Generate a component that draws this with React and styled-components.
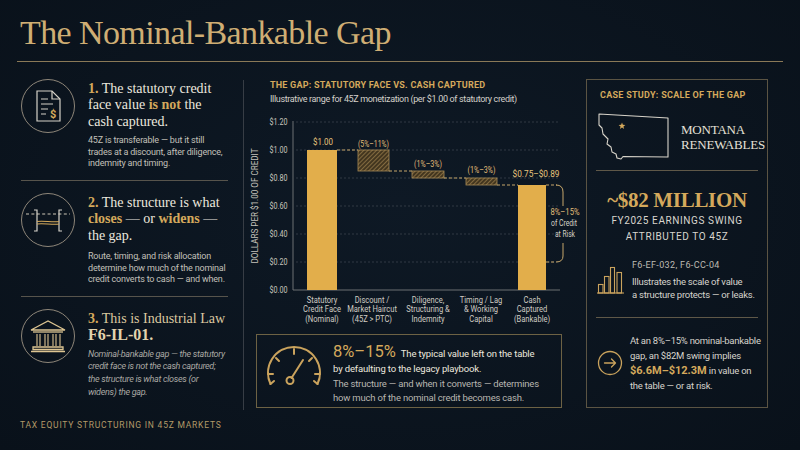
import styled, { createGlobalStyle } from 'styled-components'

const SANS = `Roboto, "Liberation Sans", sans-serif`
const SERIF = `"Liberation Serif", "Times New Roman", serif`
const GOLD = '#d4a95c'
const BAR = '#e2ae4b'
const INK = '#ece8df'
const MUTED = '#c2c0ba'

const GlobalStyle = createGlobalStyle`
  html, body { margin: 0; padding: 0; background: #0a131d; }
  * { box-sizing: border-box; }
  svg { flex: none; }
`

const Page = styled.div`
  width: 800px;
  height: 450px;
  overflow: hidden;
  background: radial-gradient(ellipse at 50% 45%, #0e1925 0%, #09111a 100%);
  color: ${INK};
  font-family: ${SANS};
  padding: 0 17px;
  display: flex;
  flex-direction: column;
`

const Header = styled.header`
  padding-top: 13px;
  padding-bottom: 8px;
  border-bottom: 1px solid #8a7957;
`

const Title = styled.h1`
  margin: 0;
  padding-left: 3px;
  font-family: ${SERIF};
  font-weight: 400;
  font-size: 34px;
  line-height: 40px;
  letter-spacing: -0.6px;
  color: #cfae74;
`

const Main = styled.main`
  flex: 1;
  display: flex;
  min-height: 0;
`

/* left column */

const LeftCol = styled.section`
  width: 215px;
  flex: none;
  display: flex;
  flex-direction: column;
  padding-top: 5px;
`

const Point = styled.div`
  display: flex;
  align-items: flex-start;
  gap: 13px;
  margin: 0 4px;
  padding: 12px 0 10px;
  border-bottom: ${({ $last }) => ($last ? 'none' : '1px solid #57544c')};
`

const Ring = styled.div`
  flex: none;
  width: 54px;
  height: 54px;
  border-radius: 50%;
  border: 1.2px solid #8e8679;
  display: flex;
  align-items: center;
  justify-content: center;
`

const PointText = styled.div`
  margin-top: 2px;
  white-space: nowrap;
`

const PointHead = styled.div`
  font-family: ${SERIF};
  font-size: 14px;
  line-height: 16.3px;
  color: ${({ $tone }) => $tone || INK};
`

const Num = styled.span`
  color: ${GOLD};
  font-weight: 700;
`

const Emph = styled.span`
  color: ${GOLD};
  font-weight: 700;
`

const Code = styled.span`
  font-size: 16px;
  font-weight: 700;
  color: #e2d3ae;
`

const PointBody = styled.p`
  margin: ${({ $gap }) => $gap || '6px'} 0 0;
  font-size: 9px;
  letter-spacing: ${({ $italic }) => ($italic ? '-0.3px' : '-0.2px')};
  line-height: ${({ $italic }) => ($italic ? '12.7px' : '11.7px')};
  font-style: ${({ $italic }) => ($italic ? 'italic' : 'normal')};
  color: ${({ $italic }) => ($italic ? '#a9a8a3' : MUTED)};
`

const Tagline = styled.div`
  margin-top: auto;
  padding: 0 0 19px 3px;
  font-size: 8.5px;
  line-height: 12px;
  letter-spacing: 0.78px;
  white-space: nowrap;
  color: #b39a68;
`

const VRule = styled.div`
  flex: none;
  width: 1px;
  background: #373d45;
  margin: 18px 6px 40px 11px;
`

/* centre column */

const CenterCol = styled.section`
  width: 315px;
  flex: none;
  display: flex;
  flex-direction: column;
  padding-top: 17px;
`

const ChartTitle = styled.h2`
  margin: 0;
  padding-left: 20px;
  font-size: 9px;
  line-height: 12px;
  font-weight: 700;
  letter-spacing: 0.22px;
  white-space: nowrap;
  color: ${GOLD};
`

const ChartSub = styled.p`
  margin: 2px 0 0;
  padding-left: 20px;
  font-size: 9px;
  line-height: 12px;
  letter-spacing: -0.35px;
  white-space: nowrap;
  color: #d4d1ca;
`

const ChartSvg = styled.svg`
  display: block;
  margin-top: 3px;
  overflow: visible;
  font-family: ${SANS};
`

const Callout = styled.div`
  margin: 8px 3px 0 6px;
  height: 74px;
  border: 1px solid #6d6244;
  display: flex;
  align-items: flex-start;
  gap: 10px;
  padding: 9px 8px;
`

const CalloutText = styled.div`
  white-space: nowrap;
`

const Lead = styled.p`
  margin: 0;
  font-size: 9.5px;
  letter-spacing: -0.15px;
  line-height: 15px;
  color: ${INK};
`

const Big = styled.span`
  font-size: 16.5px;
  letter-spacing: 0;
  line-height: 15px;
  color: ${GOLD};
  margin-right: 3px;
`

const Follow = styled.p`
  margin: 1px 0 0;
  font-size: 9.5px;
  letter-spacing: -0.2px;
  line-height: 14px;
  color: #b8b6b0;
`

/* right panel */

const CaseBox = styled.aside`
  flex: none;
  width: 182px;
  height: 329px;
  margin: 17px 0 0 21px;
  border: 1px solid #5b5443;
  padding: 9px 9px 0;
  display: flex;
  flex-direction: column;
`

const CaseLabel = styled.div`
  padding-left: 4px;
  font-size: 9px;
  line-height: 12px;
  font-weight: 700;
  letter-spacing: 0.28px;
  white-space: nowrap;
  color: ${GOLD};
`

const StateRow = styled.div`
  display: flex;
  align-items: center;
  gap: 10px;
  margin-top: 12px;
  padding-left: 1px;
`

const StateName = styled.div`
  font-family: ${SERIF};
  font-size: 13px;
  line-height: 15px;
  letter-spacing: -0.2px;
  color: #e4e0d7;
`

const Rule = styled.div`
  height: 1px;
  background: #5f5848;
  margin-top: ${({ $top }) => $top};
`

const Figure = styled.div`
  margin-top: 17px;
  text-align: center;
  font-family: ${SERIF};
  font-weight: 700;
  font-size: 21px;
  line-height: 24px;
  letter-spacing: -0.3px;
  color: ${GOLD};
`

const Caps = styled.div`
  margin-top: 1px;
  text-align: center;
  font-size: 10px;
  line-height: 16px;
  letter-spacing: 0.6px;
  color: #d8d5ce;
`

const InfoRow = styled.div`
  display: flex;
  align-items: ${({ $align }) => $align || 'flex-start'};
  gap: ${({ $gap }) => $gap || '8px'};
  margin-top: ${({ $top }) => $top};
  padding-left: 1px;
  white-space: nowrap;
`

const Ref = styled.div`
  font-size: 9px;
  line-height: 12px;
  letter-spacing: 0.35px;
  color: #bdbab3;
  margin-bottom: 5px;
`

const InfoText = styled.p`
  margin: 0;
  font-size: 9.5px;
  letter-spacing: -0.25px;
  line-height: ${({ $lh }) => $lh || '12.5px'};
  color: #d6d3cc;
`

const Money = styled.span`
  font-size: 11px;
  letter-spacing: 0;
  font-weight: 700;
  color: ${GOLD};
`

/* drawings */

const DocIcon = () => (
  <svg width="25" height="32" viewBox="0 0 25 32" fill="none">
    <path d="M1 1H16L24 9V31H1Z" stroke="#d6d2c8" strokeWidth="1.2" />
    <path d="M16 1V9H24" stroke="#d6d2c8" strokeWidth="1.2" />
    <path d="M5 9H12M5 14H17M5 19H12M5 24H10" stroke="#d6d2c8" strokeWidth="1.2" />
    <text x="14" y="28" fill={GOLD} fontSize="11" fontWeight="700" fontFamily="Roboto, sans-serif">$</text>
  </svg>
)

const GapIcon = () => (
  <svg width="44" height="28" viewBox="0 0 44 28" fill="none">
    <path d="M0 8H44" stroke="#cfc8b8" strokeWidth="1" strokeDasharray="3 2.4" />
    <path d="M8 4H11V25H8M36 4H33V25H36" stroke="#d8d4cb" strokeWidth="1.2" />
    <path d="M11 15.5C17 14.5 27 16.5 33 15.5M11 18C17 17 27 19 33 18" stroke={GOLD} strokeWidth="1.2" />
  </svg>
)

const BankIcon = () => (
  <svg width="38" height="34" viewBox="0 0 38 34" fill="none" stroke="#dcc491" strokeWidth="1.3">
    <path d="M2 11L19 2L36 11Z" />
    <path d="M4 13H34" />
    <path d="M8 15V27M11 15V27M16 15V27M19 15V27M24 15V27M27 15V27M31 15V27" strokeWidth="1.1" />
    <path d="M4 28H34V30.5H4ZM2 32.5H36" />
  </svg>
)

const Gauge = () => (
  <svg width="58" height="48" viewBox="0 0 58 48" fill="none" stroke="#caa35d" strokeWidth="2" strokeLinecap="round">
    <path d="M5.5 40A26 26 0 1 1 52.5 40" />
    <path d="M5.5 40L9 37M52.5 40L49 37" />
    <path d="M29 5V10M11 14L14 17M47 14L44 17M3 30H8M55 30H50" />
    <path d="M26.5 34L38 16" />
    <circle cx="25" cy="36.5" r="3.5" />
  </svg>
)

const star = (cx, cy) => {
  const pts = []
  for (let i = 0; i < 10; i++) {
    const r = i % 2 ? 1.5 : 3.6
    const a = (-90 + i * 36) * (Math.PI / 180)
    pts.push(`${(cx + r * Math.cos(a)).toFixed(2)},${(cy + r * Math.sin(a)).toFixed(2)}`)
  }
  return pts.join(' ')
}

const Montana = () => (
  <svg width="74" height="47" viewBox="0 0 74 47" fill="none">
    <path
      d="M2 1L71 5V44L26 43.5L24 46L20 45L19 41L15 39L14 34L10 31L11 26L6 21L5 15L2 12Z"
      stroke="#d8d4ca"
      strokeWidth="1.1"
      strokeLinejoin="round"
    />
    <polygon points={star(25, 13)} fill={GOLD} />
  </svg>
)

const BarsIcon = () => (
  <svg width="27" height="28" viewBox="0 0 27 28" fill="none" stroke="#caa35d" strokeWidth="1.1">
    <path d="M0 27H27" />
    <rect x="1.5" y="18.5" width="4.5" height="8.5" />
    <rect x="7.5" y="10.5" width="4.5" height="16.5" />
    <rect x="13.5" y="1.5" width="4" height="25.5" />
    <rect x="20" y="6.5" width="4.5" height="20.5" />
  </svg>
)

const ArrowCircle = () => (
  <svg width="26" height="26" viewBox="0 0 26 26" fill="none" stroke="#caa35d" strokeWidth="1.3" strokeLinecap="round" strokeLinejoin="round">
    <circle cx="13" cy="13" r="11.5" />
    <path d="M7.5 13H18.5M14.5 9L18.5 13L14.5 17" />
  </svg>
)

/* chart: drawn in page coordinates through the viewBox */

const ticks = [
  ['$1.20', 122],
  ['$1.00', 150],
  ['$0.80', 178],
  ['$0.60', 206],
  ['$0.40', 234],
  ['$0.20', 262],
  ['$0.00', 290],
]

const categories = [
  { x: 322, lines: ['Statutory', 'Credit Face', '(Nominal)'] },
  { x: 372, lines: ['Discount /', 'Market Haircut', '(45Z > PTC)'] },
  { x: 428, lines: ['Diligence,', 'Structuring &', 'Indemnity'] },
  { x: 481, lines: ['Timing / Lag', '& Working', 'Capital'] },
  { x: 532, lines: ['Cash', 'Captured', '(Bankable)'] },
]

const steps = [
  { x: 358, y: 150, w: 31, h: 21, label: '(5%–11%)', ly: 147, lw: 31 },
  { x: 412, y: 171, w: 32, h: 7, label: '(1%–3%)', ly: 167, lw: 28 },
  { x: 466, y: 178, w: 31, h: 7, label: '(1%–3%)', ly: 173, lw: 28 },
]

const Narrow = ({ x, y, w, size = 9, fill, children, ...rest }) => (
  <text
    x={x}
    y={y}
    textAnchor="middle"
    fontSize={size}
    fill={fill}
    textLength={w}
    lengthAdjust="spacingAndGlyphs"
    {...rest}
  >
    {children}
  </text>
)

const GapChart = () => (
  <ChartSvg width="315" height="218" viewBox="250 108 315 218">
    <defs>
      <pattern id="hatch" width="3" height="3" patternUnits="userSpaceOnUse" patternTransform="rotate(45)">
        <rect width="3" height="3" fill="#43361f" />
        <line x1="0" y1="0" x2="0" y2="3" stroke="#a58752" strokeWidth="1.3" />
      </pattern>
    </defs>

    <Narrow x="258" y="206" w="115" size={9} fill="#c6c3bb" transform="rotate(-90 258 206)">
      DOLLARS PER $1.00 OF CREDIT
    </Narrow>

    {ticks.map(([label, y]) => (
      <g key={label}>
        <Narrow x="278.5" y={y + 3} w="18" size={8.5} fill="#c9c6be">{label}</Narrow>
        {y < 290 && <path d={`M296 ${y}H560`} stroke="#3a424d" strokeWidth="0.8" strokeDasharray="2 2" />}
      </g>
    ))}
    <path d="M293 121V290H560" stroke="#6d7073" strokeWidth="1" fill="none" />

    <rect x="307" y="150" width="30" height="140" fill={BAR} />
    <Narrow x="323" y="145" w="20" size={9.5} fill="#e9c57d">$1.00</Narrow>

    {steps.map((s, i) => (
      <g key={i}>
        <rect x={s.x} y={s.y} width={s.w} height={s.h} fill="url(#hatch)" stroke="#a88b55" strokeWidth="0.8" />
        <Narrow x={s.x + s.w / 2} y={s.ly} w={s.lw} fill="#e0bd79">{s.label}</Narrow>
      </g>
    ))}

    <rect x="518" y="185" width="28" height="105" fill={BAR} />
    <Narrow x="536" y="177" w="47" size={9.5} fill="#e9c57d">$0.75–$0.89</Narrow>

    <g stroke="#c6a66a" strokeWidth="1" strokeDasharray="3 2" fill="none">
      <path d="M337 150H358" />
      <path d="M389 171H412" />
      <path d="M444 178H466" />
      <path d="M497 185H518M546 185H557" />
      <path d="M546 262H556" />
    </g>
    <g stroke="#c6a66a" strokeWidth="1" fill="none">
      <path d="M556 185Q563 185 563 192V206" />
      <path d="M563 243V256Q563 262 556 262" />
    </g>
    <Narrow x="565" y="215" w="29" fill="#e0bd79">8%–15%</Narrow>
    <Narrow x="564" y="226" w="26" fill="#d7d2c6">of Credit</Narrow>
    <Narrow x="565" y="237" w="20" fill="#d7d2c6">at Risk</Narrow>

    {categories.map((c) => (
      <text
        key={c.x}
        transform={`translate(${c.x} 0) scale(0.84 1)`}
        textAnchor="middle"
        fontSize="9"
        fill="#d0ccc3"
      >
        {c.lines.map((l, i) => (
          <tspan key={l} x="0" y={303 + i * 9.5}>{l}</tspan>
        ))}
      </text>
    ))}
  </ChartSvg>
)

export default function App() {
  return (
    <Page>
      <GlobalStyle />
      <Header>
        <Title>The Nominal-Bankable Gap</Title>
      </Header>
      <Main>
        <LeftCol>
          <Point>
            <Ring><DocIcon /></Ring>
            <PointText>
              <PointHead>
                <Num>1.</Num> The statutory credit<br />
                face value <Emph>is not</Emph> the<br />
                cash captured.
              </PointHead>
              <PointBody $gap="5px">
                45Z is transferable — but it still<br />
                trades at a discount, after diligence,<br />
                indemnity and timing.
              </PointBody>
            </PointText>
          </Point>
          <Point>
            <Ring><GapIcon /></Ring>
            <PointText>
              <PointHead>
                <Num>2.</Num> The structure is what<br />
                <Emph>closes</Emph> — or <Emph>widens</Emph> —<br />
                the gap.
              </PointHead>
              <PointBody $gap="7px">
                Route, timing, and risk allocation<br />
                determine how much of the nominal<br />
                credit converts to cash — and when.
              </PointBody>
            </PointText>
          </Point>
          <Point $last>
            <Ring><BankIcon /></Ring>
            <PointText>
              <PointHead $tone="#dcc9a0">
                <Num>3.</Num> This is Industrial Law<br />
                <Code>F6-IL-01.</Code>
              </PointHead>
              <PointBody $italic $gap="3px">
                Nominal-bankable gap — the statutory<br />
                credit face is not the cash captured;<br />
                the structure is what closes (or<br />
                widens) the gap.
              </PointBody>
            </PointText>
          </Point>
          <Tagline>TAX EQUITY STRUCTURING IN 45Z MARKETS</Tagline>
        </LeftCol>

        <VRule />

        <CenterCol>
          <ChartTitle>THE GAP: STATUTORY FACE VS. CASH CAPTURED</ChartTitle>
          <ChartSub>Illustrative range for 45Z monetization (per $1.00 of statutory credit)</ChartSub>
          <GapChart />
          <Callout>
            <Gauge />
            <CalloutText>
              <Lead>
                <Big>8%–15%</Big> The typical value left on the table<br />
                by defaulting to the legacy playbook.
              </Lead>
              <Follow>
                The structure — and when it converts — determines<br />
                how much of the nominal credit becomes cash.
              </Follow>
            </CalloutText>
          </Callout>
        </CenterCol>

        <CaseBox>
          <CaseLabel>CASE STUDY: SCALE OF THE GAP</CaseLabel>
          <StateRow>
            <Montana />
            <StateName>MONTANA<br />RENEWABLES</StateName>
          </StateRow>
          <Rule $top="10px" />
          <Figure>~$82 MILLION</Figure>
          <Caps>FY2025 EARNINGS SWING<br />ATTRIBUTED TO 45Z</Caps>
          <InfoRow $top="14px" $align="center">
            <BarsIcon />
            <div>
              <Ref>F6-EF-032, F6-CC-04</Ref>
              <InfoText>
                Illustrates the scale of value<br />
                a structure protects — or leaks.
              </InfoText>
            </div>
          </InfoRow>
          <Rule $top="16px" />
          <InfoRow $top="15px" $gap="7px" $align="center">
            <ArrowCircle />
            <InfoText $lh="15px">
              At an 8%–15% nominal-bankable<br />
              gap, an $82M swing implies<br />
              <Money>$6.6M–$12.3M</Money> in value on<br />
              the table — or at risk.
            </InfoText>
          </InfoRow>
        </CaseBox>
      </Main>
    </Page>
  )
}
